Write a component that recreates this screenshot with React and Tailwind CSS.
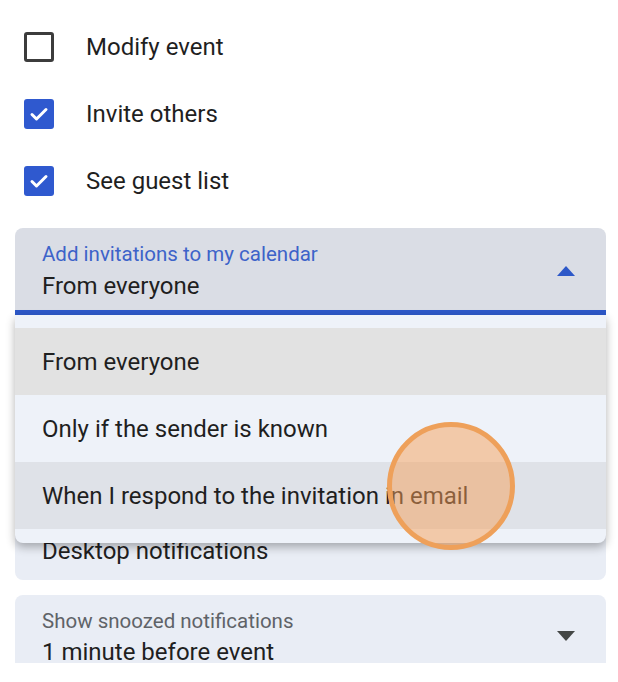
import { useState } from "react";

const font = { fontFamily: "Roboto, 'Noto Sans', Arial, sans-serif" };

function Box({ checked }) {
  if (!checked) {
    return <span className="block h-[30px] w-[30px] rounded-[3px] border-[3px] border-[#3c3c3c] bg-white" />;
  }
  return (
    <span className="block h-[30px] w-[30px] rounded-[3px] bg-[#2f59cf]">
      <svg viewBox="0 0 30 30" className="h-[30px] w-[30px]" fill="none" stroke="white" strokeWidth="3" strokeLinecap="round" strokeLinejoin="round">
        <path d="M8 15.5l4.5 4.5 9.5-9.5" />
      </svg>
    </span>
  );
}

function Caret({ up, color }) {
  return (
    <svg viewBox="0 0 18 10" className="h-[10px] w-[18px]" fill={color}>
      {up ? <path d="M0 10L9 0l9 10z" /> : <path d="M0 0h18L9 10z" />}
    </svg>
  );
}

export default function App() {
  const [perms, setPerms] = useState({ modify: false, invite: true, guests: true });
  const rows = [
    ["modify", "Modify event"],
    ["invite", "Invite others"],
    ["guests", "See guest list"],
  ];
  const options = [
    { label: "From everyone", bg: "bg-[#e2e2e2]" },
    { label: "Only if the sender is known", bg: "bg-[#eef2f9]" },
    { label: "When I respond to the invitation in email", bg: "bg-[#dfe2e8]" },
  ];

  return (
    <div style={font} className="h-[682px] w-[618px] bg-white text-[#1f1f1f]">
      <div className="h-[663px] overflow-hidden pl-[15px] pr-[12px] pt-[13px]">
        {rows.map(([key, text]) => (
          <label
            key={key}
            onClick={() => setPerms((p) => ({ ...p, [key]: !p[key] }))}
            className="flex h-[67px] cursor-pointer items-center gap-[32px] pl-[9px] text-[24px]"
          >
            <Box checked={perms[key]} />
            {text}
          </label>
        ))}

        <div className="relative z-10 mt-[14px]">
          <div className="flex h-[87px] items-start justify-between rounded-t-[8px] border-b-[5px] border-[#2d58c8] bg-[#dadde5] pl-[27px] pr-[31px] pt-[12px]">
            <div className="flex flex-col">
              <span className="text-[20.5px] leading-[29px] text-[#3d63c9]">Add invitations to my calendar</span>
              <span className="text-[24px] leading-[34px]">From everyone</span>
            </div>
            <div className="pt-[26px]">
              <Caret up color="#2d58c8" />
            </div>
          </div>

          {/* open menu */}
          <div className="absolute left-0 right-0 top-full overflow-hidden rounded-b-[8px] bg-[#eef2f9] pb-[14px] pt-[13px] shadow-[0_4px_10px_rgba(0,0,0,0.3)]">
            {options.map((o) => (
              <div key={o.label} className={`flex h-[67px] items-center pl-[27px] text-[24px] ${o.bg}`}>
                {o.label}
              </div>
            ))}
          </div>
        </div>

        <div className="mt-[15px] flex h-[250px] items-end rounded-[8px] bg-[#e9edf5] pb-[14px] pl-[27px] text-[24px] leading-[30px]">
          Desktop notifications
        </div>

        <div className="mt-[15px] flex h-[68px] items-start justify-between rounded-t-[8px] bg-[#e9edf5] pl-[27px] pr-[31px] pt-[12px]">
          <div className="flex flex-col">
            <span className="text-[20.5px] leading-[28px] text-[#5f6368]">Show snoozed notifications</span>
            <span className="mt-[6px] text-[24px] leading-[22px]">1 minute before event</span>
          </div>
          <div className="pt-[24px]">
            <Caret color="#444746" />
          </div>
        </div>
      </div>

      {/* tap indicator */}
      <div className="pointer-events-none absolute left-[387px] top-[422px] z-20 h-[128px] w-[128px] rounded-full border-[5px] border-[#eea05a] bg-[#f5a05a]/50" />
    </div>
  );
}
